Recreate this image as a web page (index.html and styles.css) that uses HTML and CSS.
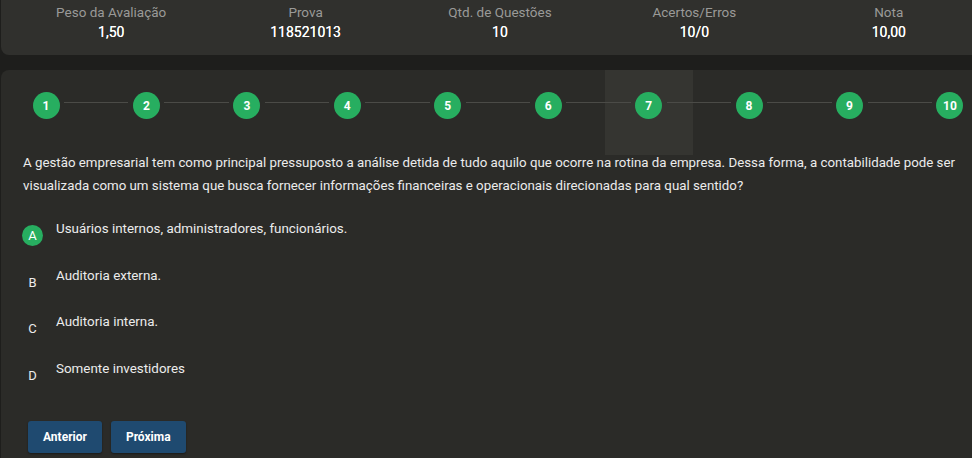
FILE: index.html
```html
<!DOCTYPE html>
<html lang="pt-BR">
<head>
<meta charset="utf-8">
<title>Avaliação</title>
<link rel="stylesheet" href="styles.css">
</head>
<body>
<div class="page">
  <section class="summary">
    <div class="stat"><div class="stat-label">Peso da Avaliação</div><div class="stat-value">1,50</div></div>
    <div class="stat"><div class="stat-label">Prova</div><div class="stat-value">118521013</div></div>
    <div class="stat"><div class="stat-label">Qtd. de Questões</div><div class="stat-value">10</div></div>
    <div class="stat"><div class="stat-label">Acertos/Erros</div><div class="stat-value">10/0</div></div>
    <div class="stat"><div class="stat-label">Nota</div><div class="stat-value">10,00</div></div>
  </section>

  <section class="exam">
    <div class="steps">
      <div class="step first"><span class="line"></span><span class="dot">1</span><span class="line"></span></div>
      <span class="connector"></span>
      <div class="step"><span class="line"></span><span class="dot">2</span><span class="line"></span></div>
      <span class="connector"></span>
      <div class="step"><span class="line"></span><span class="dot">3</span><span class="line"></span></div>
      <span class="connector"></span>
      <div class="step"><span class="line"></span><span class="dot">4</span><span class="line"></span></div>
      <span class="connector"></span>
      <div class="step"><span class="line"></span><span class="dot">5</span><span class="line"></span></div>
      <span class="connector"></span>
      <div class="step"><span class="line"></span><span class="dot">6</span><span class="line"></span></div>
      <span class="connector"></span>
      <div class="step active"><span class="line"></span><span class="dot">7</span><span class="line"></span></div>
      <span class="connector"></span>
      <div class="step"><span class="line"></span><span class="dot">8</span><span class="line"></span></div>
      <span class="connector"></span>
      <div class="step"><span class="line"></span><span class="dot">9</span><span class="line"></span></div>
      <span class="connector"></span>
      <div class="step last"><span class="line"></span><span class="dot">10</span><span class="line"></span></div>
    </div>

    <p class="question">A gestão empresarial tem como principal pressuposto a análise detida de tudo aquilo que ocorre na rotina da empresa. Dessa forma, a contabilidade pode ser visualizada como um sistema que busca fornecer informações financeiras e operacionais direcionadas para qual sentido?</p>

    <ul class="options">
      <li class="option selected"><span class="letter">A</span><span class="option-text">Usuários internos, administradores, funcionários.</span></li>
      <li class="option"><span class="letter">B</span><span class="option-text">Auditoria externa.</span></li>
      <li class="option"><span class="letter">C</span><span class="option-text">Auditoria interna.</span></li>
      <li class="option"><span class="letter">D</span><span class="option-text">Somente investidores</span></li>
    </ul>

    <div class="actions">
      <button class="btn">Anterior</button>
      <button class="btn">Próxima</button>
    </div>
  </section>
</div>
</body>
</html>
```

FILE: styles.css
```css
* { box-sizing: border-box; }

html, body {
  margin: 0;
  padding: 0;
  background: #1e1e1c;
  overflow: hidden;
}

body {
  width: 972px;
  height: 458px;
  font-family: Roboto, "Liberation Sans", sans-serif;
  color: #ececec;
}

.page {
  width: 1000px;
  padding-left: 1px;
}

.summary {
  height: 55px;
  background: #30302d;
  border-radius: 0 0 0 8px;
  display: grid;
  grid-template-columns: repeat(5, 194.4px);
  padding: 2px 0 0 13px;
}

.stat {
  text-align: center;
}

.stat-label {
  font-size: 13.5px;
  line-height: 20px;
  color: #9a9a98;
}

.stat-value {
  font-size: 14px;
  line-height: 20px;
  color: #ffffff;
  font-weight: 400;
  text-shadow: 0 0 0.3px #ffffff;
}

.exam {
  margin-top: 15px;
  background: #2b2b28;
  border-radius: 8px 0 0 0;
  height: 400px;
}

.steps {
  display: flex;
  width: 992px;
  margin-left: 1px;
  height: 85px;
}

.step {
  flex: 0 0 88px;
  display: flex;
  align-items: flex-start;
  padding-top: 22px;
}

.step.active {
  background: #353531;
}

.line {
  flex: 1;
  height: 1px;
  margin-top: 10px;
  background: #4b4b47;
}

.step.first .line:first-child,
.step.last .line:last-child {
  background: transparent;
}

.connector {
  flex: 1;
  height: 1px;
  margin-top: 32px;
  background: #4b4b47;
}

.dot {
  flex: 0 0 27px;
  width: 27px;
  height: 27px;
  margin: 0 4.5px;
  border-radius: 50%;
  background: #27ae60;
  color: #ffffff;
  font-weight: 700;
  font-size: 12px;
  display: flex;
  align-items: center;
  justify-content: center;
}

.question {
  margin: -4px 0 0 0;
  padding: 0 10px 0 22px;
  font-size: 13.3px;
  line-height: 23px;
  color: #ececec;
}

.options {
  list-style: none;
  margin: 22px 0 0 0;
  padding: 0 0 0 21px;
}

.option {
  display: flex;
  align-items: flex-start;
  height: 46.5px;
}

.letter {
  flex: 0 0 21px;
  width: 21px;
  height: 21px;
  margin-top: 6px;
  border-radius: 50%;
  display: flex;
  align-items: center;
  justify-content: center;
  font-size: 13px;
  color: #ececec;
}

.option.selected .letter {
  background: #27ae60;
  color: #ffffff;
}

.option-text {
  margin-left: 13px;
  font-size: 13.4px;
  line-height: 20px;
}

.actions {
  display: flex;
  gap: 9px;
  margin: 16px 0 0 27px;
}

.btn {
  height: 32px;
  padding: 0 15px;
  border: none;
  border-radius: 3px;
  background: #1f4a70;
  color: #ffffff;
  font-family: Roboto, "Liberation Sans", sans-serif;
  font-weight: 700;
  font-size: 12px;
  box-shadow: 0 1px 2px rgba(0, 0, 0, 0.4);
}
```
